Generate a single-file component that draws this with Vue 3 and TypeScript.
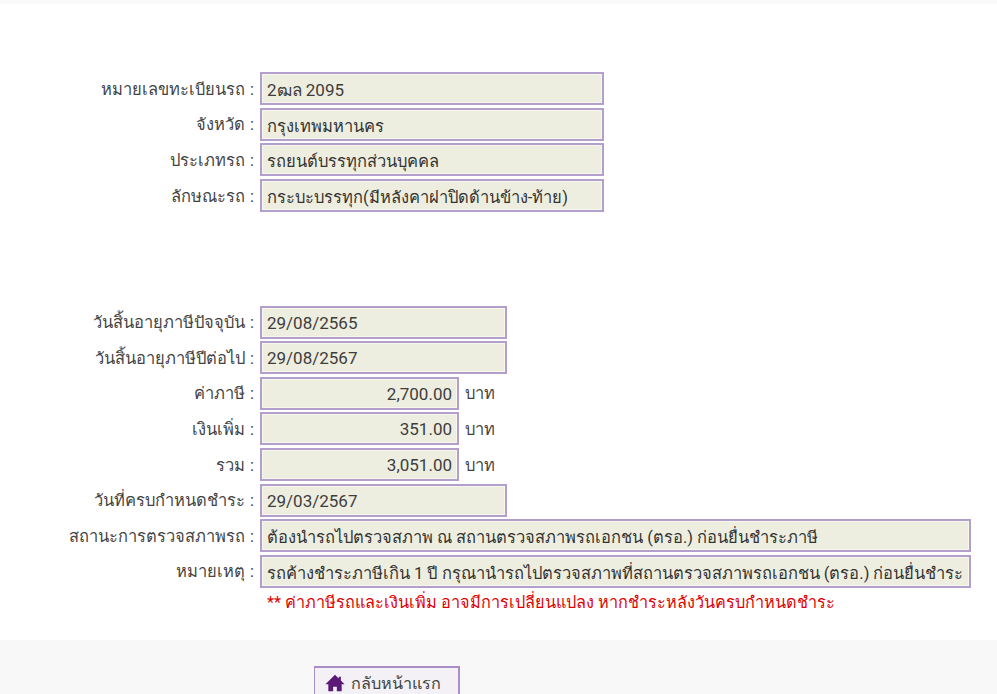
<script setup lang="ts">
interface Row { label: string; value: string; width: number; right?: boolean; unit?: string; num?: boolean }
const vehicle: Row[] = [
  { label: 'หมายเลขทะเบียนรถ :', value: '2ฒล 2095', width: 344, num: true },
  { label: 'จังหวัด :', value: 'กรุงเทพมหานคร', width: 344 },
  { label: 'ประเภทรถ :', value: 'รถยนต์บรรทุกส่วนบุคคล', width: 344 },
  { label: 'ลักษณะรถ :', value: 'กระบะบรรทุก(มีหลังคาฝาปิดด้านข้าง-ท้าย)', width: 344 },
]
const tax: Row[] = [
  { label: 'วันสิ้นอายุภาษีปัจจุบัน :', value: '29/08/2565', width: 247, num: true },
  { label: 'วันสิ้นอายุภาษีปีต่อไป :', value: '29/08/2567', width: 247, num: true },
  { label: 'ค่าภาษี :', value: '2,700.00', width: 199, right: true, unit: 'บาท', num: true },
  { label: 'เงินเพิ่ม :', value: '351.00', width: 199, right: true, unit: 'บาท', num: true },
  { label: 'รวม :', value: '3,051.00', width: 199, right: true, unit: 'บาท', num: true },
  { label: 'วันที่ครบกำหนดชำระ :', value: '29/03/2567', width: 247, num: true },
  { label: 'สถานะการตรวจสภาพรถ :', value: 'ต้องนำรถไปตรวจสภาพ ณ สถานตรวจสภาพรถเอกชน (ตรอ.) ก่อนยื่นชำระภาษี', width: 711 },
  { label: 'หมายเหตุ :', value: 'รถค้างชำระภาษีเกิน 1 ปี กรุณานำรถไปตรวจสภาพที่สถานตรวจสภาพรถเอกชน (ตรอ.) ก่อนยื่นชำระ', width: 711 },
]
</script>

<template>
  <div class="page">
    <div class="strip"></div>
    <section class="group first">
      <div v-for="r in vehicle" :key="r.label" class="row">
        <div class="label">{{ r.label }}</div>
        <div class="box" :class="{ right: r.right, num: r.num }" :style="{ width: r.width + 'px' }">{{ r.value }}</div>
      </div>
    </section>
    <section class="group second">
      <div v-for="r in tax" :key="r.label" class="row">
        <div class="label">{{ r.label }}</div>
        <div class="box" :class="{ right: r.right, num: r.num }" :style="{ width: r.width + 'px' }">{{ r.value }}</div>
        <div v-if="r.unit" class="unit">{{ r.unit }}</div>
      </div>
      <div class="note">** ค่าภาษีรถและเงินเพิ่ม อาจมีการเปลี่ยนแปลง หากชำระหลังวันครบกำหนดชำระ</div>
    </section>
    <footer class="foot">
      <button class="back" type="button">
        <svg class="home" viewBox="0 0 24 24" width="20" height="20" aria-hidden="true">
          <path d="M12 2 0.5 13.5h3.5V22h5.8v-5.5h4.4V22H20v-8.500h3.500L19 9V4.500h-2.500v2z" fill="#5b1a78" />
        </svg>
        <span>กลับหน้าแรก</span>
      </button>
    </footer>
  </div>
</template>

<style>
html, body { margin: 0; background: #fff; overflow: hidden; }
</style>

<style scoped>
.page {
  width: 997px;
  height: 694px;
  overflow: hidden;
  font-family: Roboto, "Noto Sans", sans-serif;
  font-size: 16.5px;
  color: #444;
  background: #fff;
}
.strip { height: 4px; background: #fafafa; }
.group { display: flex; flex-direction: column; }
.first { padding-top: 67px; }
.second { padding-top: 91px; }
.row {
  display: flex;
  align-items: center;
  height: 35.6px;
}
.label {
  width: 254px;
  flex: none;
  text-align: right;
  white-space: nowrap;
  word-spacing: 1px;
}
.box {
  box-sizing: border-box;
  height: 33px;
  flex: none;
  margin-left: 6px;
  padding: 0 3px 0 5px;
  line-height: 33px;
  border: 2px solid #b39fcb;
  background: #eeeee0;
  box-shadow: inset 0 0 0 1px #f7f7ee;
  color: #333;
  white-space: nowrap;
  overflow: hidden;
}
.box.num { font-size: 17px; color: #3d3d3d; }
.second .box.num { line-height: 31px; }
.box.right { text-align: right; padding-right: 5px; }
.unit { margin-left: 6px; font-size: 16.5px; }
.note {
  margin: 0 0 0 267px;
  height: 28px;
  line-height: 28px;
  font-size: 16.25px;
  color: #e00000;
  white-space: nowrap;
}
.foot {
  height: 60px;
  margin-top: 23px;
  background: #f8f8f8;
  padding: 26px 0 0 314px;
  box-sizing: border-box;
}
.back {
  display: flex;
  align-items: center;
  gap: 6px;
  width: 146px;
  height: 36px;
  box-sizing: border-box;
  padding: 0 0 2px 10px;
  border: 2px solid #a98fc8;
  border-left-width: 1px;
  background: #f3f1f5;
  font-family: inherit;
  font-size: 16.2px;
  color: #444;
}
.home { flex: none; }
</style>
